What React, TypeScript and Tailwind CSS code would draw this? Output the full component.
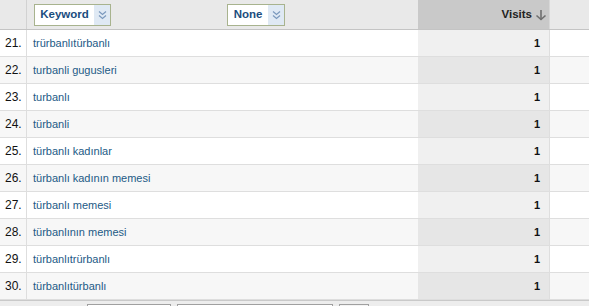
const ROWS = [
  { n: 21, k: 'trürbanlıtürbanlı' },
  { n: 22, k: 'turbanli gugusleri' },
  { n: 23, k: 'turbanlı' },
  { n: 24, k: 'türbanli' },
  { n: 25, k: 'türbanlı kadınlar' },
  { n: 26, k: 'türbanlı kadının memesi' },
  { n: 27, k: 'türbanlı memesi' },
  { n: 28, k: 'türbanlının memesi' },
  { n: 29, k: 'türbanlıtrürbanlı' },
  { n: 30, k: 'türbanlıtürbanlı' },
]

function DoubleChevron() {
  return (
    <svg width="9" height="10" viewBox="0 0 9 10" fill="none" stroke="#7a98bd" strokeWidth="1.2">
      <path d="M1 1.5 L4.5 4.5 L8 1.5" />
      <path d="M1 5.5 L4.5 8.5 L8 5.5" />
    </svg>
  )
}

function Picker({ label, w }: { label: string; w: string }) {
  return (
    <div className={`flex h-[22px] ${w} items-stretch border border-[#a8b38e] bg-white`}>
      <span className="flex flex-1 items-center justify-center text-[11.5px] font-bold text-[#1b4d7e]">{label}</span>
      <span className="flex w-[16px] items-center justify-center bg-[#dfe9f4]">
        <DoubleChevron />
      </span>
    </div>
  )
}

export default function App() {
  return (
    <div className="h-[306px] w-[589px] overflow-hidden bg-white" style={{ fontFamily: '"Liberation Sans", Arial, sans-serif' }}>
      {/* header */}
      <div className="grid h-[30px] grid-cols-[27px_391px_132px_1fr] border-b border-[#c4c4c4] bg-[#e9e9e9]">
        <div className="border-r border-[#d2d2d2]" />
        <div className="flex items-start justify-between pt-[4px] pl-[7px] pr-[133px]">
          <Picker label="Keyword" w="w-[77px]" />
          <Picker label="None" w="w-[58px]" />
        </div>
        <div className="flex items-center justify-end gap-[3px] border-r border-[#d8d8d8] bg-[#c9c9c9] pr-[2px] text-[11.5px] font-bold text-[#222]">
          Visits
          <svg width="12" height="12" viewBox="0 0 12 12" fill="none" stroke="#6f6f6f" strokeWidth="1.6">
            <path d="M6 1 V10.5" />
            <path d="M1.5 6.5 L6 10.5 L10.5 6.5" />
          </svg>
        </div>
        <div />
      </div>

      {/* rows */}
      {ROWS.map((r, i) => {
        const alt = i % 2 === 1
        return (
          <div
            key={r.n}
            className={`grid h-[27px] grid-cols-[27px_391px_132px_1fr] border-b border-[#dedede] ${alt ? 'bg-[#f7f7f7]' : 'bg-white'}`}
          >
            <div className="flex items-center border-r border-[#dedede] pl-[5px] text-[12px] text-[#111]">{r.n}.</div>
            <div className="flex items-center pl-[6px] text-[11px] text-[#1d5a86]">{r.k}</div>
            <div
              className={`flex items-center justify-end border-r border-[#dedede] pr-[9px] text-[11px] font-bold text-[#111] ${alt ? 'bg-[#e6e6e6]' : 'bg-[#f0f0f0]'}`}
            >
              1
            </div>
            <div />
          </div>
        )
      })}

      {/* footer */}
      <div className="flex h-[20px] items-start gap-[6px] border-t border-[#c9c9c9] bg-[#ededed] pt-[3px] pl-[87px]">
        <div className="h-[18px] w-[84px] border border-[#a0a0a0] bg-white" />
        <div className="h-[18px] w-[156px] border border-[#a0a0a0] bg-white" />
        <div className="h-[18px] w-[30px] border border-[#a0a0a0] bg-[#f4f4f4]" />
      </div>
    </div>
  )
}
